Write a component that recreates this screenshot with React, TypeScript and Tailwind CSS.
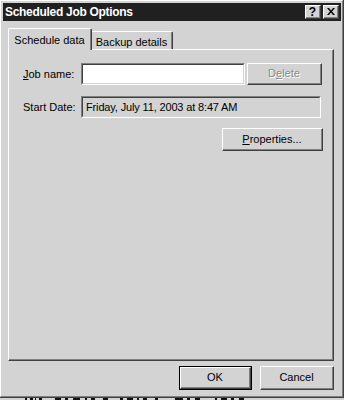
import React from "react";

const font = { fontFamily: '"Liberation Sans", Arial, sans-serif' };

function Btn({ children, className = "", isDefault = false }: { children: React.ReactNode; className?: string; isDefault?: boolean }) {
  if (isDefault) {
    return (
      <div className={`border border-[#000] ${className}`}>
        <div className="w-full h-full border-l border-t border-white border-r border-b border-r-[#404040] border-b-[#404040]">
          <div className="w-full h-full border-r border-b border-[#808080] flex items-center justify-center text-[11px] text-black">
            {children}
          </div>
        </div>
      </div>
    );
  }
  return (
    <div className={`border-l border-t border-white border-r border-b border-r-[#404040] border-b-[#404040] ${className}`}>
      <div className="w-full h-full border-r border-b border-[#808080] flex items-center justify-center text-[11px] text-black">
        {children}
      </div>
    </div>
  );
}

function Sunken({ children, className = "", bg = "bg-white" }: { children?: React.ReactNode; className?: string; bg?: string }) {
  return (
    <div className={`border-l border-t border-[#808080] border-r border-b border-r-white border-b-white ${className}`}>
      <div className={`w-full h-full border-l border-t border-[#404040] border-r border-b border-r-[#d3d3d3] border-b-[#d3d3d3] ${bg} flex items-center px-[2px] text-[11px] text-black whitespace-nowrap`}>
        {children}
      </div>
    </div>
  );
}

export default function App() {
  return (
    <div className="w-[344px] h-[400px] bg-[#d3d3d3] overflow-hidden flex flex-col" style={font}>
      <div className="h-[398px] w-[344px] border-r border-b border-[#404040] shrink-0">
        <div className="h-full w-full border-l border-t border-white border-r border-b border-r-[#808080] border-b-[#808080] pl-[1px] pt-[1px] pr-[1px] flex flex-col">
          {/* title bar */}
          <div className="mt-[1px] ml-[1px] h-[18px] bg-[#202020] flex items-center justify-between pl-[2px] pr-[2px]">
            <span className="text-white font-bold text-[12px] leading-none tracking-[-0.3px] whitespace-nowrap">Scheduled Job Options</span>
            <div className="flex gap-[2px]">
              <Btn className="w-[16px] h-[14px] bg-[#d3d3d3]">
                <span className="font-bold text-[12px] leading-none">?</span>
              </Btn>
              <Btn className="w-[16px] h-[14px] bg-[#d3d3d3]">
                <svg width="8" height="7" viewBox="0 0 8 7">
                  <path d="M0 0h2l2 2.5 2-2.5h2L5 3.5 8 7H6L4 4.5 2 7H0l3-3.5z" fill="#000" />
                </svg>
              </Btn>
            </div>
          </div>
          {/* body */}
          <div className="flex-1 flex flex-col pl-[6px] pr-[6px]">
            {/* tabs */}
            <div className="flex items-end mt-[6px] h-[22px] relative z-10">
              <div className="h-[22px] w-[84px] border-l border-t border-white border-r border-r-[#404040] rounded-tl-[2px] rounded-tr-[2px] bg-[#d3d3d3] text-[11px] text-black -mb-[1px] whitespace-nowrap">
                <div className="w-full h-[21px] border-r border-[#808080] flex justify-center pt-[3px]">Schedule data</div>
              </div>
              <div className="h-[18px] w-[81px] border-t border-white border-r border-r-[#404040] rounded-tr-[2px] text-[11px] text-black whitespace-nowrap">
                <div className="w-full h-full border-r border-[#808080] flex justify-center pt-[2px]">Backup details</div>
              </div>
            </div>
            {/* panel */}
            <div className="h-[312px] w-[326px] border-l border-t border-white border-r border-b border-r-[#404040] border-b-[#404040]">
              <div className="w-full h-full border-r border-b border-[#808080] pl-[14px] pt-[13px] flex flex-col text-[11px]">
                <div className="flex items-center h-[22px]">
                  <span className="w-[58px] text-black whitespace-nowrap"><span className="underline">J</span>ob name:</span>
                  <Sunken className="w-[164px] h-[22px]" />
                  <div className="w-[2px]" />
                  <Btn className="w-[75px] h-[22px]">
                    <span className="text-[#8a8a8a] [text-shadow:1px_1px_0_#fff]">D<span className="underline">e</span>lete</span>
                  </Btn>
                </div>
                <div className="flex items-center h-[22px] mt-[11px]">
                  <span className="w-[58px] text-black whitespace-nowrap">Start Date:</span>
                  <Sunken className="w-[240px] h-[22px]" bg="bg-[#d3d3d3]">
                    <span className="pl-[1px] tracking-[-0.15px]">Friday, July 11, 2003 at 8:47 AM</span>
                  </Sunken>
                </div>
                <div className="flex justify-end w-[300px] mt-[10px]">
                  <Btn className="w-[101px] h-[23px]">
                    <span><span className="underline">P</span>roperties...</span>
                  </Btn>
                </div>
              </div>
            </div>
            {/* buttons */}
            <div className="flex justify-end gap-[8px] mt-[5px] w-[326px]">
              <Btn isDefault className="w-[73px] h-[24px]">OK</Btn>
              <Btn className="w-[74px] h-[24px]">Cancel</Btn>
            </div>
          </div>
        </div>
      </div>
      <div className="h-[2px] overflow-hidden bg-[#d3d3d3] pl-[25px]">
        <svg width="300" height="2" viewBox="0 0 300 2">
          <path d="M0 0h2v2H0zM5 0h3v2H5zM10 0h1v2h-1zM14 0h3v2h-3zM30 0h6v2h-6zM40 0h3v2h-3zM48 0h7v2h-7zM60 0h2v2h-2zM66 0h4v2h-4zM78 0h5v2h-5zM95 0h3v2h-3zM102 0h6v2h-6zM112 0h2v2h-2zM118 0h4v2h-4zM130 0h3v2h-3zM150 0h8v2h-8zM162 0h3v2h-3zM170 0h5v2h-5zM190 0h2v2h-2zM196 0h6v2h-6zM206 0h3v2h-3zM214 0h5v2h-5z" fill="#111" />
        </svg>
      </div>
    </div>
  );
}
